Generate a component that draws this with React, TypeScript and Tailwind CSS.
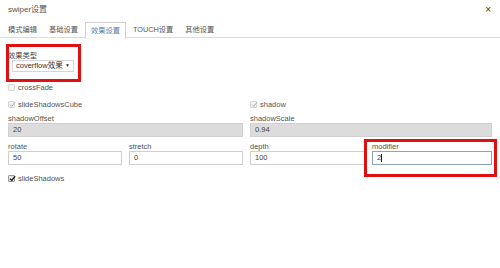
import React from 'react'

const font = { fontFamily: '"Liberation Sans", "Noto Sans CJK SC", sans-serif' }

type CheckProps = {
  label: string
  checked?: boolean
  disabled?: boolean
}

function Check({ label, checked, disabled }: CheckProps) {
  return (
    <div className="flex items-center h-[9px] gap-[3px]">
      <span
        className={
          'relative w-[7px] h-[7px] border rounded-[1px] ' +
          (disabled ? 'border-[#d8d8d8] bg-[#f3f3f3]' : 'border-[#9a9a9a] bg-[#e8e8e8]')
        }
      >
        {checked && (
          <svg viewBox="0 0 8 8" className="absolute left-[0px] top-[-1px] w-[7px] h-[7px]">
            <path
              d="M1.2 4.2 L3.2 6.2 L7 1.2"
              fill="none"
              stroke={disabled ? '#b0b0b0' : '#222'}
              strokeWidth={disabled ? 1.1 : 1.6}
            />
          </svg>
        )}
      </span>
      <span className="text-[7.5px] leading-[9px] text-[#555]">{label}</span>
    </div>
  )
}

type FieldProps = {
  label: string
  value: string
  disabled?: boolean
  focused?: boolean
}

function Field({ label, value, disabled, focused }: FieldProps) {
  return (
    <div className="flex flex-col">
      <span className="text-[7.5px] leading-[8px] h-[8px] text-[#555]">{label}</span>
      <div
        className={
          'h-[14px] border pl-[4px] flex items-center text-[7.5px] text-[#444] ' +
          (disabled
            ? 'bg-[#dcdcdc] border-[#d0d0d0]'
            : focused
              ? 'bg-white border-[#8ea3b9]'
              : 'bg-white border-[#cfcfcf]')
        }
      >
        {value}
        {focused && <span className="w-px h-[8px] bg-[#222]" />}
      </div>
    </div>
  )
}

const tabs = ['模式编辑', '基础设置', '效果设置', 'TOUCH设置', '其他设置']

export default function App() {
  return (
    <div className="w-[500px] h-[268px] bg-white overflow-hidden" style={font}>
      <div className="h-[19px] pl-[8px] pr-[9px] flex items-center justify-between">
        <span className="text-[8px] text-[#555]">swiper设置</span>
        <span className="text-[10px] leading-none text-[#333]">×</span>
      </div>

      <div className="mt-[3px] flex pl-[3px] border-b border-[#dcdcdc] h-[16px]">
        {tabs.map((t, i) => (
          <div
            key={t}
            className={
              'h-[16px] px-[5px] mr-[2px] flex items-center text-[7.25px] ' +
              (i === 2
                ? 'border border-b-0 border-[#d0d0d0] bg-white text-[#5b80a8] -mb-px h-[17px]'
                : 'text-[#555]')
            }
          >
            {t}
          </div>
        ))}
      </div>

      <div className="px-[8px] pt-[13px]">
        <div className="relative w-[70px]">
          <div className="text-[7.25px] leading-[9px] h-[9px] text-[#444]">效果类型</div>
          <div className="ml-[4px] w-[62px] h-[12px] border border-[#d6d6d6] flex items-center justify-between px-[3px] text-[7.5px] text-[#333]">
            <span>coverflow效果</span>
            <span className="text-[5px]">▼</span>
          </div>
          <div className="absolute left-[-2px] top-[-7px] w-[75px] h-[38px] border-[3px] border-[#e01010]" />
        </div>

        <div className="mt-[11px]">
          <Check label="crossFade" disabled />
        </div>

        <div className="mt-[8px] grid grid-cols-[235px_1fr] gap-x-[7px]">
          <Check label="slideShadowsCube" checked disabled />
          <Check label="shadow" checked disabled />
        </div>

        <div className="mt-[6px] grid grid-cols-[235px_1fr] gap-x-[7px]">
          <Field label="shadowOffset" value="20" disabled />
          <Field label="shadowScale" value="0.94" disabled />
        </div>

        <div className="mt-[6px] grid grid-cols-[114px_114px_115px_1fr] gap-x-[7px]">
          <Field label="rotate" value="50" />
          <Field label="stretch" value="0" />
          <Field label="depth" value="100" />
          <div className="relative">
            <Field label="modifier" value="2" focused />
            <div className="absolute left-[-8px] top-[-4px] right-[-5px] h-[38px] border-[3px] border-[#e01010]" />
          </div>
        </div>

        <div className="mt-[9px]">
          <Check label="slideShadows" checked />
        </div>
      </div>
    </div>
  )
}
